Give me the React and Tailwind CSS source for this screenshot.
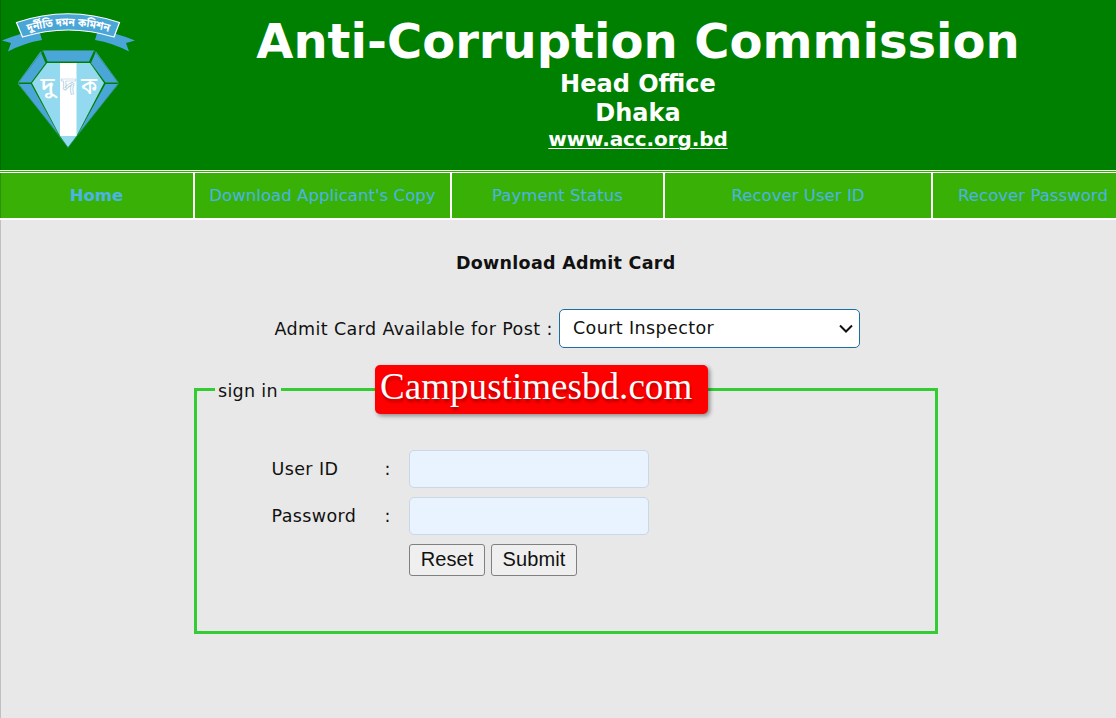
const BN = "font-['Noto_Sans_Bengali','Noto_Sans','DejaVu_Sans',sans-serif]";

function Emblem() {
  return (
    <svg width="140" height="155" viewBox="0 0 140 155" className="block">
      <g fill="#4ba6d8">
        <path d="M2 40.5 Q20 33 39 30 L42 40 Q24 43 8 51.5 L11 43 Z" />
        <path d="M135 40.5 Q117 33 98 30 L95 40 Q113 43 129 51.5 L126 43 Z" />
        <path d="M16.5 22.500 Q68 5 119.500 22.500 L114 37 Q68 23 22.500 37 Z" stroke="#fff" strokeWidth="1.200" />
      </g>
      <path id="ribbon" d="M28 32 Q68 20 109 32" fill="none" />
      <text className={BN} fontSize="11.500" fill="#fff">
        <textPath href="#ribbon" textLength="82" lengthAdjust="spacingAndGlyphs">দুর্নীতি দমন কমিশন</textPath>
      </text>
      <g fill="#4ba6d8">
        <path d="M43 50.500 H94 L89 61.500 H47.500 Z" />
        <path d="M40.500 51.500 L45.500 63 L31 82.500 H18 Z" />
        <path d="M96 51.500 L91 63 L105.500 82.500 H118.500 Z" />
        <path d="M18 84 H31 L59 135 Z" />
        <path d="M118.500 84 H105.500 L77.500 135 Z" />
      </g>
      <path d="M47 63 H90 L104 83 L76.500 136 L68 147.500 L60 136 L32 83 Z" fill="#93d9f0" />
      <path d="M43 50.500 H94 L118.500 83 L68 147.500 L18 83 Z" fill="none" stroke="#2e9377" strokeWidth="0.800" />
      <path d="M60 63 H76.500 V136 H60 Z" fill="#fff" />
      <g className={BN} fontSize="24" fontWeight="500" textAnchor="middle" fill="#fff">
        <text x="47.500" y="93.500" textLength="14" lengthAdjust="spacingAndGlyphs">দু</text>
        <text x="68.500" y="93.500" textLength="14" lengthAdjust="spacingAndGlyphs" stroke="#a8cbe2" strokeWidth="0.700">দ</text>
        <text x="89" y="93.500" textLength="16" lengthAdjust="spacingAndGlyphs">ক</text>
      </g>
    </svg>
  );
}

function NavItem({ className, children }) {
  return (
    <a href="#" className={`flex h-[45px] shrink-0 items-center justify-center border-white pt-[2px] text-[#4bb4e6] whitespace-nowrap ${className}`}>
      {children}
    </a>
  );
}

function Field({ label, type }) {
  return (
    <label className="flex h-[38px] items-center">
      <span className="w-[113px] pt-px">{label}</span>
      <span className="w-[24.500px] pt-px">:</span>
      <input type={type} className="h-[38px] w-[240px] rounded-[5px] border border-[#c9d8e6] bg-[#e8f3ff]" />
    </label>
  );
}

export default function App() {
  return (
    <div className="h-[718px] w-[1116px] overflow-hidden bg-[#e8e8e8] font-['DejaVu_Sans',sans-serif] text-[17.500px] tracking-[0.39px] text-[#111]">
      <header className="flex h-[170px] border-l border-[#006800] bg-[#008000] font-bold tracking-normal text-white">
        <div className="-ml-px w-[140px] shrink-0"><Emblem /></div>
        <div className="flex w-[996px] shrink-0 flex-col items-center pt-[12px] whitespace-nowrap">
          <h1 className="text-[48px] leading-[58px]">Anti-Corruption Commission</h1>
          <p className="text-[24px] leading-[28px]">Head Office</p>
          <p className="text-[24px] leading-[30px]">Dhaka</p>
          <a href="#" className="text-[20px] leading-[23px] tracking-[-0.100px] underline decoration-1 underline-offset-2">www.acc.org.bd</a>
        </div>
      </header>
      <nav className="border-t border-b-2 border-white bg-[#39b006]">
        <div className="h-[2px] border-b border-white" />
        <div className="flex h-[45px] w-[1130px] border-l border-l-[#2f9005] text-[16.500px] tracking-[0.050px]">
          <NavItem className="w-[194px] border-r-2 pr-px font-bold">Home</NavItem>
          <NavItem className="w-[257px] border-r-2">Download Applicant's Copy</NavItem>
          <NavItem className="w-[213px] border-r-2">Payment Status</NavItem>
          <NavItem className="w-[268px] border-r-2">Recover User ID</NavItem>
          <NavItem className="w-[200px]">Recover Password</NavItem>
        </div>
      </nav>
      <main className="relative h-[498px] border-l border-[#c0c0c0]">
        <h2 className="pt-[31px] pl-[455px] text-[17.500px] leading-[24px] font-bold tracking-[0.280px]">Download Admit Card</h2>
        <div className="mt-[34px] flex h-[39px] items-center pl-[273.500px]">
          <span className="w-[284.500px] pt-[2px] whitespace-nowrap">Admit Card Available for Post :</span>
          <button className="flex h-[39px] w-[301px] items-center justify-between rounded-[5px] border border-[#1b6f9f] bg-white pr-[6px] pl-[13px]">
            <span className="whitespace-nowrap">Court Inspector</span>
            <svg width="14" height="10" viewBox="0 0 14 10" fill="none" stroke="#111" strokeWidth="2"><path d="M1 1.500 L7 7.500 L13 1.500" /></svg>
          </button>
        </div>
        <fieldset className="mt-[32px] ml-[192.500px] h-[254px] w-[744px] border-[3px] border-[#33cc33] pl-[75px]">
          <legend className="-ml-[57px] h-[19px] w-[66px] pl-[3.500px] leading-[22px] tracking-[0.300px] whitespace-nowrap">sign in</legend>
          <div className="flex flex-col gap-[9px] pt-[51px]">
            <Field label="User ID" type="text" />
            <Field label="Password" type="password" />
            <div className="flex gap-[6px] pl-[137.500px] font-['Liberation_Sans',sans-serif] text-[20px] tracking-[0.100px]">
              <button type="reset" className="h-[32px] w-[76px] rounded-[3px] border border-[#808080] bg-[#efefef] pb-[2px] leading-[26px]">Reset</button>
              <button type="submit" className="h-[32px] w-[86px] rounded-[3px] border border-[#808080] bg-[#efefef] pb-[2px] leading-[26px]">Submit</button>
            </div>
          </div>
        </fieldset>
        <div className="absolute top-[145px] left-[374px] h-[49px] w-[333px] rounded-[5px] bg-[#ff0000] pl-[5px] font-['Liberation_Serif',serif] text-[37px] leading-[43px] tracking-[0.050px] text-white shadow-[2px_2px_4px_rgba(0,0,0,0.4)] [text-shadow:1px_3px_3px_rgba(0,0,0,0.3)]">Campustimesbd.com</div>
      </main>
    </div>
  );
}
